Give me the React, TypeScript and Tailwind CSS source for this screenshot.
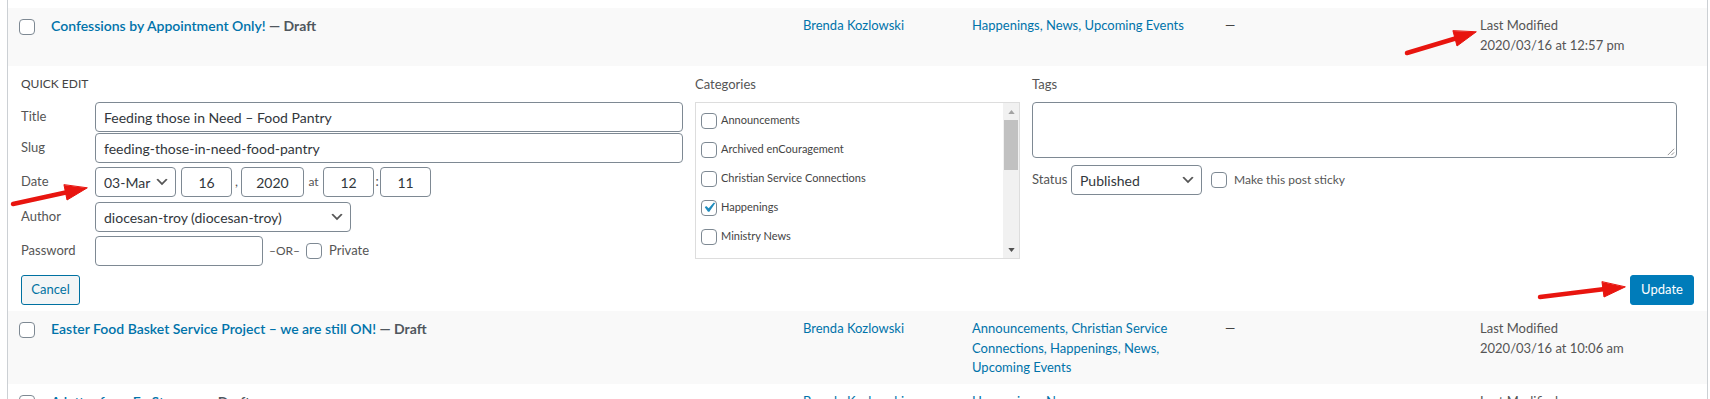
import React from 'react'

const LINK = 'text-[#0073aa]'
const FONT = "font-['Segoe_UI',Lato,sans-serif]"

function Checkbox({ checked = false, className = '' }: { checked?: boolean; className?: string }) {
    return (
        <span className={`flex h-4 w-4 shrink-0 items-center justify-center rounded-[4px] border border-[#7e8993] bg-white ${className}`}>
            {checked && (
                <svg viewBox="0 0 20 20" className="-m-[3px] h-[21px] w-[21px]">
                    <path d="M14.83 4.89l1.34.94-5.81 8.38H9.02L5.78 9.67l1.34-1.25 2.57 2.4z" fill="#1e8cbe" />
                </svg>
            )}
        </span>
    )
}

function Chevron() {
    return (
        <svg viewBox="0 0 20 20" className="h-4 w-4 shrink-0">
            <path d="M5 6l5 5 5-5 2 1-7 7-7-7 2-1z" fill="#555" />
        </svg>
    )
}

function Input({ value = '', className = '', center = false }: { value?: string; className?: string; center?: boolean }) {
    return (
        <div className={`flex h-[30px] items-center rounded-[4px] border border-[#7e8993] bg-white px-[8px] text-[14px] text-[#32373c] ${center ? 'justify-center' : ''} ${className}`}>
            {value}
        </div>
    )
}

function Select({ value, className = '' }: { value: string; className?: string }) {
    return (
        <div className={`flex h-[30px] items-center justify-between rounded-[4px] border border-[#7e8993] bg-white pl-[8px] pr-[5px] text-[14px] text-[#32373c] ${className}`}>
            <span>{value}</span>
            <Chevron />
        </div>
    )
}

function Row({ title, categories, date, height }: { title: string; categories: string[]; date: string; height: string }) {
    return (
        <div className={`flex ${height}`}>
            <div className="w-[33px] shrink-0 pl-[11px] pt-[11px]">
                <Checkbox />
            </div>
            <div className="w-[752px] shrink-0 pl-[10px] pt-[8px] text-[14px] font-semibold leading-[20px]">
                <span className={LINK}>{title}</span>
                <span className="font-bold text-[#50575e]"> — Draft</span>
            </div>
            <div className="w-[169px] shrink-0 pl-[10px] pt-[8px] text-[13px] leading-[19.5px]">
                <span className={LINK}>Brenda Kozlowski</span>
            </div>
            <div className={`w-[256px] shrink-0 pl-[10px] pr-[20px] pt-[8px] text-[13px] leading-[19.5px] ${LINK}`}>
                {categories.join(', ')}
            </div>
            <div className="w-[252px] shrink-0 pl-[7px] pt-[8px] text-[13px] leading-[19.5px] text-[#444]">—</div>
            <div className="flex-1 pl-[10px] pt-[8px] text-[13px] leading-[19.5px] text-[#555]">
                <div>Last Modified</div>
                <div>{date}</div>
            </div>
        </div>
    )
}

const CATS = [
    { name: 'Announcements', checked: false },
    { name: 'Archived enCouragement', checked: false },
    { name: 'Christian Service Connections', checked: false },
    { name: 'Happenings', checked: true },
    { name: 'Ministry News', checked: false },
    { name: 'News', checked: true },
]

function QuickEdit() {
    return (
        <div className="h-[245px] bg-white pl-[13px] pr-[13px] pt-[10px] text-[13px] text-[#444]">
            <div className="flex items-start gap-[12px]">
                {/* left fieldset */}
                <div className="w-[662px] shrink-0">
                    <div className="mb-[10px] h-[16px] text-[12px] uppercase leading-[16px] text-[#444]">Quick Edit</div>
                    <div className="flex items-center">
                        <span className="w-[74px] shrink-0 text-[#555]">Title</span>
                        <Input value="Feeding those in Need – Food Pantry" className="flex-1" />
                    </div>
                    <div className="mt-[1px] flex items-center">
                        <span className="w-[74px] shrink-0 text-[#555]">Slug</span>
                        <Input value="feeding-those-in-need-food-pantry" className="flex-1" />
                    </div>
                    <div className="mt-[4px] flex items-center">
                        <span className="w-[74px] shrink-0 text-[#555]">Date</span>
                        <Select value="03-Mar" className="w-[81px]" />
                        <Input value="16" center className="ml-[5px] w-[51px]" />
                        <span className="w-[9px] text-center text-[#555]">,</span>
                        <Input value="2020" center className="w-[63px]" />
                        <span className="w-[19px] text-center text-[12px] text-[#555]">at</span>
                        <Input value="12" center className="w-[51px]" />
                        <span className="w-[6px] text-center text-[#555]">:</span>
                        <Input value="11" center className="w-[51px]" />
                    </div>
                    <div className="mt-[5px] flex items-center">
                        <span className="w-[74px] shrink-0 text-[#555]">Author</span>
                        <Select value="diocesan-troy (diocesan-troy)" className="w-[256px]" />
                    </div>
                    <div className="mt-[4px] flex items-center">
                        <span className="w-[74px] shrink-0 text-[#555]">Password</span>
                        <Input className="w-[168px]" />
                        <span className="ml-[6px] text-[12px] text-[#555]">–OR–</span>
                        <Checkbox className="ml-[6px]" />
                        <span className="ml-[7px] text-[#555]">Private</span>
                    </div>
                </div>

                {/* categories */}
                <div className="w-[325px] shrink-0">
                    <div className="mb-[10px] h-[16px] leading-[16px] text-[#555]">Categories</div>
                    <div className="flex h-[157px] overflow-hidden border border-[#ddd] bg-white">
                        <div className="flex-1 pl-[5px] pt-[3px]">
                            {CATS.map((c) => (
                                <div key={c.name} className="flex h-[29px] items-center gap-[4px] text-[11px] text-[#444]">
                                    <Checkbox checked={c.checked} />
                                    <span>{c.name}</span>
                                </div>
                            ))}
                        </div>
                        <div className="flex w-[16px] shrink-0 flex-col items-center bg-[#f1f1f1]">
                            <div className="flex h-[17px] items-center justify-center">
                                <svg viewBox="0 0 8 5" className="h-[4px] w-[7px]"><path d="M4 0l4 5H0z" fill="#a3a3a3" /></svg>
                            </div>
                            <div className="h-[50px] w-[14px] bg-[#c1c1c1]" />
                            <div className="flex-1" />
                            <div className="flex h-[17px] items-center justify-center">
                                <svg viewBox="0 0 8 5" className="h-[4px] w-[7px]"><path d="M0 0h8L4 5z" fill="#505050" /></svg>
                            </div>
                        </div>
                    </div>
                </div>

                {/* tags / status */}
                <div className="w-[645px] shrink-0">
                    <div className="mb-[10px] h-[16px] leading-[16px] text-[#555]">Tags</div>
                    <div className="relative h-[56px] rounded-[4px] border border-[#7e8993] bg-white">
                        <svg viewBox="0 0 10 10" className="absolute bottom-[1px] right-[1px] h-[9px] w-[9px]">
                            <path d="M9 2L2 9M9 6L6 9" stroke="#888" strokeWidth="1" />
                        </svg>
                    </div>
                    <div className="mt-[7px] flex items-center">
                        <span className="w-[39px] shrink-0 text-[#555]">Status</span>
                        <Select value="Published" className="w-[131px]" />
                        <Checkbox className="ml-[9px]" />
                        <span className="ml-[7px] text-[12px] text-[#555]">Make this post sticky</span>
                    </div>
                </div>
            </div>

            <div className="mt-[9px] flex items-center justify-between">
                <button className="h-[30px] w-[59px] rounded-[3px] border border-[#0071a1] bg-[#f3f5f6] text-[13px] text-[#0071a1]">Cancel</button>
                <button className="h-[30px] w-[64px] rounded-[3px] border border-[#007cba] bg-[#007cba] text-[13px] text-white">Update</button>
            </div>
        </div>
    )
}

function Arrows() {
    return (
        <svg className="pointer-events-none absolute left-0 top-0" width="1710" height="399">
            <g fill="#e8150f" stroke="#e8150f" strokeWidth="4.5" strokeLinecap="round">
                <line x1="13" y1="204" x2="68" y2="192" />
                <polygon points="87,188 67,200 64,185" strokeWidth="1" />
                <line x1="1407" y1="53" x2="1457" y2="38" />
                <polygon points="1476,32 1457,46 1453,31" strokeWidth="1" />
                <line x1="1540" y1="297" x2="1605" y2="289" />
                <polygon points="1625,287 1604,297 1602,282" strokeWidth="1" />
            </g>
        </svg>
    )
}

export default function App() {
    return (
        <div className={`relative h-[399px] w-[1710px] overflow-hidden bg-white ${FONT}`}>
            <div className="ml-[7px] h-full w-[1701px] border-x border-[#ccd0d4]">
                <div className="h-[8px] bg-white" />
                <div className="bg-[#f9f9f9]">
                    <Row
                        title="Confessions by Appointment Only!"
                        categories={['Happenings', 'News', 'Upcoming Events']}
                        date="2020/03/16 at 12:57 pm"
                        height="h-[58px]"
                    />
                </div>
                <QuickEdit />
                <div className="bg-[#f9f9f9]">
                    <Row
                        title="Easter Food Basket Service Project – we are still ON!"
                        categories={['Announcements', 'Christian Service Connections', 'Happenings', 'News', 'Upcoming Events']}
                        date="2020/03/16 at 10:06 am"
                        height="h-[73px]"
                    />
                </div>
                <div className="bg-white">
                    <Row
                        title="A letter from Fr. Stevens"
                        categories={['Happenings', 'News']}
                        date="2020/03/16 at 9:41 am"
                        height="h-[60px]"
                    />
                </div>
            </div>
            <Arrows />
        </div>
    )
}
